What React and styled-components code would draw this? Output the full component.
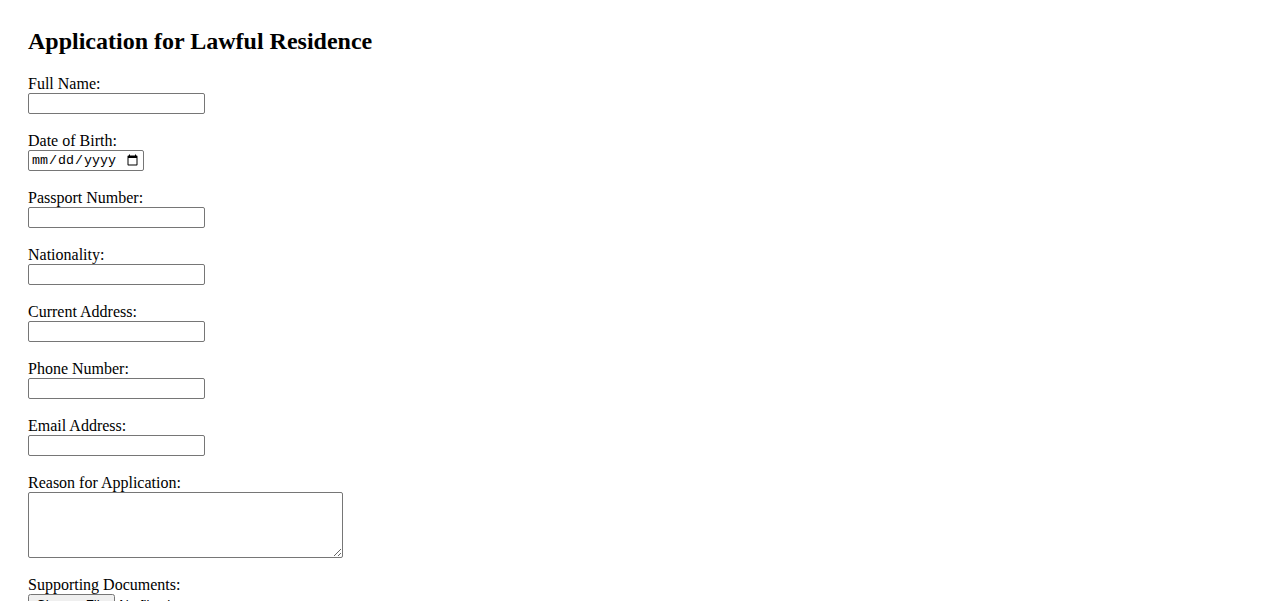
import styled, { createGlobalStyle } from 'styled-components';

const GlobalStyle = createGlobalStyle`
  body {
    margin: 0;
    background: #fff;
    color: #000;
    font-family: 'Liberation Serif', 'Times New Roman', serif;
    font-size: 16px;
  }
`;

const Page = styled.form`
  padding: 28px 28px 0;
`;

const Title = styled.h2`
  margin: 0 0 19.5px;
  font-size: 24px;
  font-weight: 700;
  line-height: 27.6px;
`;

const Field = styled.div`
  display: flex;
  flex-direction: column;
  align-items: flex-start;
  margin-bottom: 18px;
`;

const Label = styled.label`
  display: block;
  height: 18px;
  line-height: 18.4px;
`;

const Input = styled.input`
  box-sizing: border-box;
  width: ${({ $width }) => $width || 177}px;
  height: 21px;
  margin: 0;
  padding: 1px 2px;
  border: 1px solid #767676;
  border-radius: 2px;
  font-family: ${({ type }) => type === 'date' ? "'Liberation Mono', monospace" : "'Liberation Sans', Arial, sans-serif"};
  font-size: 13.33px;
  background: #fff;
`;

const TextArea = styled.textarea`
  box-sizing: border-box;
  width: 315px;
  height: 66px;
  margin: 0;
  padding: 2px;
  border: 1px solid #767676;
  border-radius: 2px;
  font-family: 'Liberation Mono', monospace;
  font-size: 13.33px;
`;

const FileInput = styled.input`
  margin: 0;
  font-family: 'Liberation Sans', Arial, sans-serif;
  font-size: 13.33px;
`;

const fields = [
  { id: 'fullName', label: 'Full Name:', type: 'text' },
  { id: 'dob', label: 'Date of Birth:', type: 'date', width: 116 },
  { id: 'passport', label: 'Passport Number:', type: 'text' },
  { id: 'nationality', label: 'Nationality:', type: 'text' },
  { id: 'address', label: 'Current Address:', type: 'text' },
  { id: 'phone', label: 'Phone Number:', type: 'tel' },
  { id: 'email', label: 'Email Address:', type: 'email' },
];

const App = () => {
  return (
    <>
      <GlobalStyle />
      <Page onSubmit={e => e.preventDefault()}>
        <Title>Application for Lawful Residence</Title>
        {fields.map(f => (
          <Field key={f.id}>
            <Label htmlFor={f.id}>{f.label}</Label>
            <Input id={f.id} type={f.type} $width={f.width} />
          </Field>
        ))}
        <Field>
          <Label htmlFor='reason'>Reason for Application:</Label>
          <TextArea id='reason' />
        </Field>
        <Field>
          <Label htmlFor='docs'>Supporting Documents:</Label>
          <FileInput id='docs' type='file' />
        </Field>
      </Page>
    </>
  );
};

export default App;
